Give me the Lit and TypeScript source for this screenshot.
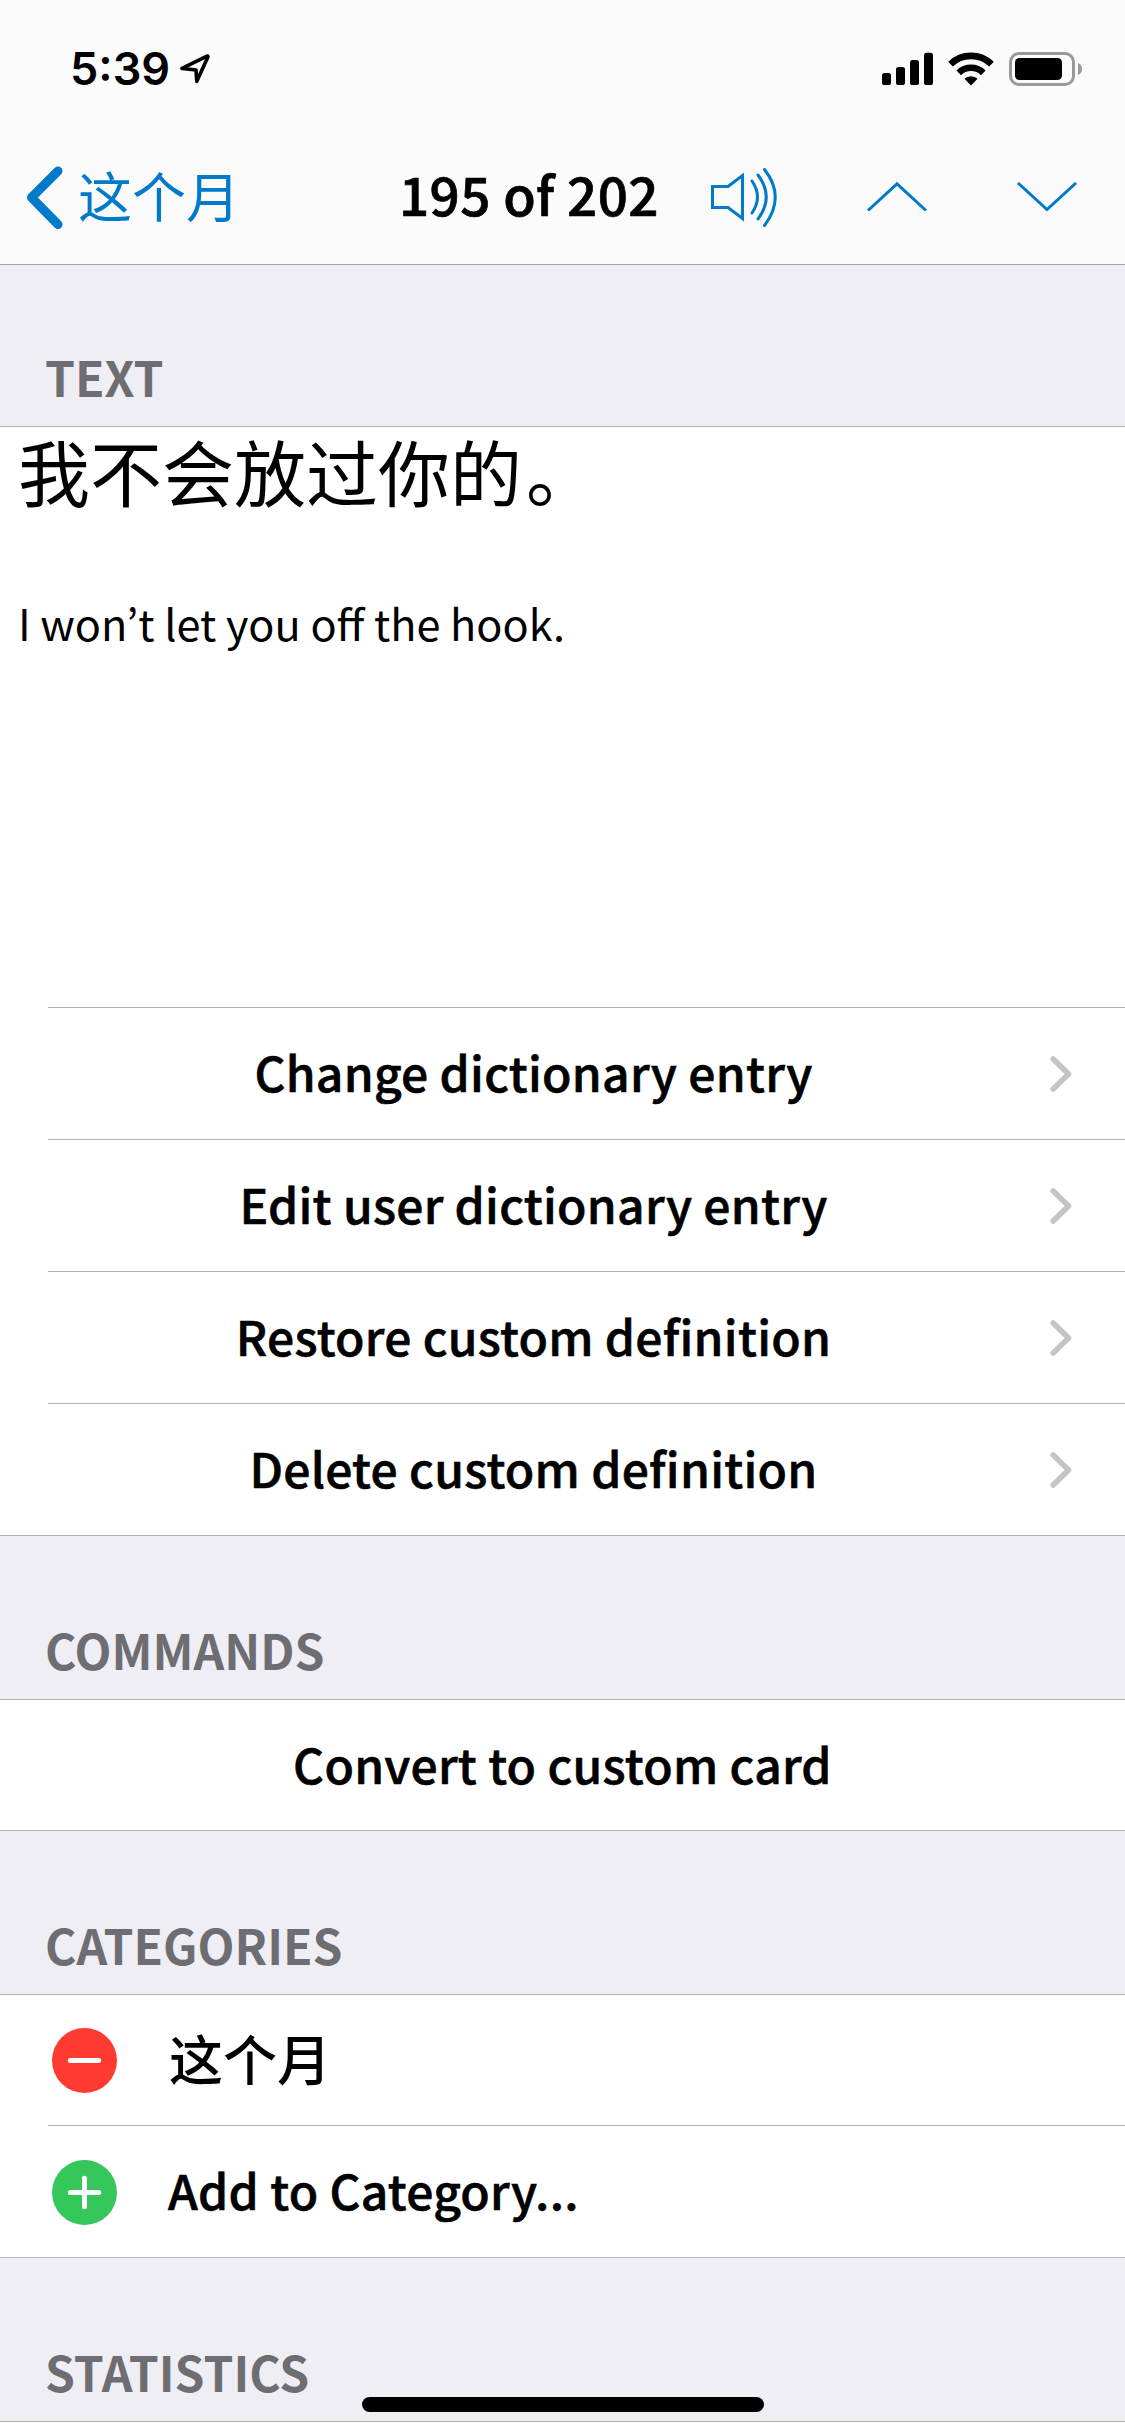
import { LitElement, html, css, svg, nothing } from "lit";
import { customElement, property } from "lit/decorators.js";

const ICONS: Record<string, { w: number; h: number; body: unknown }> = {
  location: {
    w: 32,
    h: 32,
    body: svg`<path d="M3 16.4 L28 4.2 Q29.4 3.8 28.8 5.3 L17.8 29.3 L17 18 Z" fill="none" stroke="#000" stroke-width="3.6" stroke-linejoin="round"/>`,
  },
  signal: {
    w: 52,
    h: 34,
    body: svg`<g fill="#000"><rect x="0" y="21" width="9" height="12" rx="2.6"/><rect x="14" y="15" width="9" height="18" rx="2.6"/><rect x="28" y="8" width="9" height="25" rx="2.6"/><rect x="42" y="0.7" width="9" height="32.3" rx="2.6"/></g>`,
  },
  wifi: {
    w: 46,
    h: 34,
    body: svg`<g fill="none" stroke="#000" stroke-width="6.6"><path d="M2.5 12.2 A29.5 29.5 0 0 1 43.5 12.2"/><path d="M10.7 20.8 A17.6 17.6 0 0 1 35.3 20.8"/></g><path d="M16.4 26.8 A9.6 9.6 0 0 1 29.6 26.8 L23 33.4 Z" fill="#000"/>`,
  },
  battery: {
    w: 74,
    h: 34,
    body: svg`<rect x="1.5" y="1.5" width="63" height="31" rx="8.5" fill="none" stroke="#999" stroke-width="3"/><rect x="6" y="6" width="47" height="22" rx="4.5" fill="#000"/><path d="M69 11 A6.5 6.5 0 0 1 69 23 Z" fill="#999"/>`,
  },
  back: {
    w: 38,
    h: 64,
    body: svg`<path d="M32 5 L5.5 31.5 L32 58.5" fill="none" stroke="#007ac9" stroke-width="9" stroke-linecap="round" stroke-linejoin="round"/>`,
  },
  speaker: {
    w: 68,
    h: 60,
    body: svg`<g fill="none" stroke="#007ac9" stroke-width="3"><path d="M2.5 18.500 H18 L32.5 7.500 V50.500 L18 39.500 H2.5 Z"/><path d="M42 13 Q53 29 42 45" stroke-linecap="round"/><path d="M48 7 Q64.500 29 48 51" stroke-linecap="round"/><path d="M54.500 1.500 Q76 29 54.500 57.500" stroke-linecap="round"/></g>`,
  },
  up: {
    w: 62,
    h: 32,
    body: svg`<path d="M2 28.500 L31 1.800 L60 28.500" fill="none" stroke="#007ac9" stroke-width="3"/>`,
  },
  down: {
    w: 62,
    h: 32,
    body: svg`<path d="M2 1 L31 27.500 L60 1" fill="none" stroke="#007ac9" stroke-width="3"/>`,
  },
  disclosure: {
    w: 22,
    h: 38,
    body: svg`<path d="M3.200 4 L18.500 19 L3.200 34" fill="none" stroke="#c5c5c7" stroke-width="5.600" stroke-linecap="round" stroke-linejoin="round"/>`,
  },
  remove: {
    w: 65,
    h: 65,
    body: svg`<circle cx="32.500" cy="32.500" r="32.500" fill="#ff3b31"/><path d="M18.300 32.500 H46.700" stroke="#fff" stroke-width="5" stroke-linecap="round"/>`,
  },
  add: {
    w: 65,
    h: 65,
    body: svg`<circle cx="32.500" cy="32.500" r="32.500" fill="#35c759"/><path d="M18.300 32.500 H46.700 M32.500 18.300 V46.700" stroke="#fff" stroke-width="5" stroke-linecap="round"/>`,
  },
};

@customElement("ui-icon")
class UiIcon extends LitElement {
  @property() name = "";
  static styles = css`
    :host { display: block; flex: none; }
    svg { display: block; }
  `;
  render() {
    const icon = ICONS[this.name];
    return icon
      ? html`<svg width=${icon.w} height=${icon.h} viewBox="0 0 ${icon.w} ${icon.h}">${icon.body}</svg>`
      : nothing;
  }
}

const ENTRY_ACTIONS = [
  "Change dictionary entry",
  "Edit user dictionary entry",
  "Restore custom definition",
  "Delete custom definition",
];

@customElement("app-root")
class AppRoot extends LitElement {
  static styles = css`
    :host {
      display: block;
      height: 2436px;
      overflow: hidden;
      position: relative;
      background: #efeef4;
      color: #000;
      font-family: "Noto Sans CJK SC", sans-serif;
      font-size: 48px;
    }
    .top {
      height: 264px;
      background: #fbfbfc;
      border-bottom: 1px solid #a6a6aa;
    }
    .status {
      display: flex;
      align-items: flex-start;
      height: 132px;
      box-sizing: border-box;
      padding: 52px 42px 0 70px;
    }
    .time {
      width: 109px;
      font: 600 45px/34px Inter, sans-serif;
      white-space: nowrap;
    }
    .signal { margin-left: auto; }
    .wifi { margin-left: 14px; }
    .battery { margin-left: 15px; }
    .nav {
      display: flex;
      align-items: center;
      height: 132px;
      padding-left: 26px;
    }
    .back {
      display: flex;
      align-items: center;
      width: 373px;
      color: #007ac9;
      font-size: 54px;
      gap: 14px;
    }
    .back span { line-height: 80px; padding-bottom: 7px; }
    .title {
      width: 311px;
      font-size: 53px;
      font-weight: 500;
      line-height: 80px;
      padding-bottom: 11px;
      letter-spacing: 0.4px;
      white-space: nowrap;
      -webkit-text-stroke: 0.7px #000;
    }
    .up { margin-left: 88px; }
    .down { margin-left: 88px; }
    .heading {
      height: 162px;
      padding-left: 45px;
      box-sizing: border-box;
      padding-top: 71px;
      line-height: 80px;
      font-weight: 700;
      color: #6d6d72;
      border-bottom: 1px solid #b2b2b4;
    }
    .heading.tall { height: 164px; padding-top: 73px; }
    .group { background: #fff; border-bottom: 1px solid #b2b2b4; }
    .card { height: 580px; padding-left: 18px; }
    .word { font-size: 72px; line-height: 86px; }
    .stop { margin-left: 4px; }
    .meaning {
      font-family: "Noto Sans CJK KR", sans-serif;
      font-size: 43.2px;
      line-height: 64px;
      padding-top: 77px;
    }
    .row {
      display: flex;
      align-items: center;
      height: 131px;
      margin-left: 48px;
      font-weight: 500;
      box-sizing: border-box;
    }
    .row + .row, .card + .row { border-top: 1px solid #b2b2b4; height: 132px; }
    .row .label {
      line-height: 80px;
      padding-bottom: 5px;
      letter-spacing: 0.26px;
      -webkit-text-stroke: 0.6px #000;
    }
    .row.action .label { flex: 1; text-align: center; }
    .row.action { padding-right: 53px; }
    .row.action .label { padding-right: 31px; }
    .row.command { height: 130px; margin: 0; justify-content: center; }
    .row.category { padding-left: 4px; gap: 51px; }
    .row.category + .row.category ui-icon { padding-top: 2px; }
    .row.category.named { height: 130px; gap: 52px; }
    .row.category.named .label { font-size: 54px; letter-spacing: 0; -webkit-text-stroke: 0; }
    .sheet { background: #fff; height: 20px; }
    .home {
      position: absolute;
      left: 362px;
      top: 2397px;
      width: 402px;
      height: 15px;
      border-radius: 8px;
      background: #000;
    }
  `;

  render() {
    return html`
      <header class="top">
        <div class="status">
          <span class="time">5:39</span>
          <ui-icon name="location"></ui-icon>
          <ui-icon class="signal" name="signal"></ui-icon>
          <ui-icon class="wifi" name="wifi"></ui-icon>
          <ui-icon class="battery" name="battery"></ui-icon>
        </div>
        <nav class="nav">
          <div class="back"><ui-icon name="back"></ui-icon><span>这个月</span></div>
          <div class="title">195 of 202</div>
          <ui-icon name="speaker"></ui-icon>
          <ui-icon class="up" name="up"></ui-icon>
          <ui-icon class="down" name="down"></ui-icon>
        </nav>
      </header>
      <div class="heading">TEXT</div>
      <section class="group">
        <div class="card">
          <div class="word">我不会放过你的<span class="stop">。</span></div>
          <div class="meaning">I won’t let you off the hook.</div>
        </div>
        ${ENTRY_ACTIONS.map(
          (label) => html`<div class="row action">
            <span class="label">${label}</span><ui-icon name="disclosure"></ui-icon>
          </div>`
        )}
      </section>
      <div class="heading tall">COMMANDS</div>
      <section class="group">
        <div class="row command"><span class="label">Convert to custom card</span></div>
      </section>
      <div class="heading tall">CATEGORIES</div>
      <section class="group">
        <div class="row category named"><ui-icon name="remove"></ui-icon><span class="label">这个月</span></div>
        <div class="row category"><ui-icon name="add"></ui-icon><span class="label">Add to Category...</span></div>
      </section>
      <div class="heading tall">STATISTICS</div>
      <div class="sheet"></div>
      <div class="home"></div>
    `;
  }
}
